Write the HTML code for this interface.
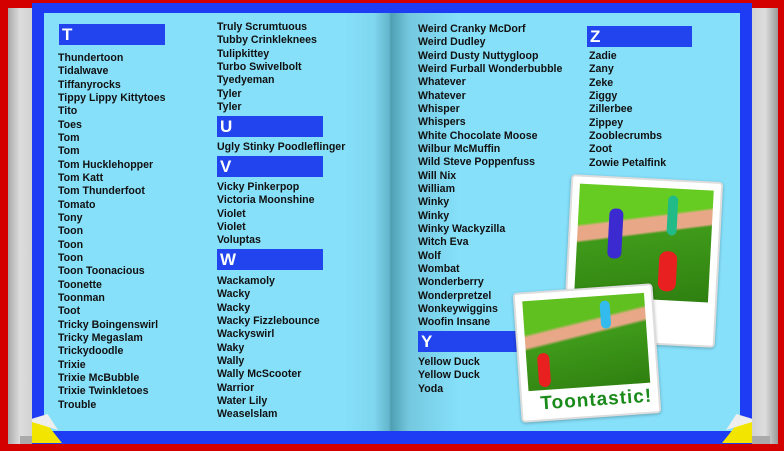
<!DOCTYPE html><html><head><style>
*{margin:0;padding:0;box-sizing:border-box}
body{width:784px;height:451px;overflow:hidden;background:#d40000;position:relative;font-family:"Liberation Sans",sans-serif}
.a{position:absolute}
.col{position:absolute;font-size:10.6px;font-weight:bold;line-height:13.33px;color:#111;white-space:nowrap}
.bar{position:absolute;height:21px;background:#2244ee;color:#fff;font-weight:bold;font-size:17px;line-height:21px;padding-left:3px}
</style></head><body>
<div class="a" style="left:8px;top:8px;width:30px;height:436px;background:linear-gradient(90deg,#aaa,#ddd 40%,#ccc)"></div>
<div class="a" style="left:746px;top:8px;width:32px;height:436px;background:linear-gradient(90deg,#ccc,#ddd 60%,#999)"></div>
<div class="a" style="left:20px;top:436px;width:750px;height:8px;background:#aaa"></div>
<div class="a" style="left:32px;top:3px;width:720px;height:441px;background:#1f3cf5"></div>
<div class="a" style="left:44px;top:13px;width:696px;height:418px;background:linear-gradient(90deg,#86e0fa 0,#86e0fa 300px,#7fd6ee 330px,#63b6cc 345px,#4f9fb3 347px,#74c8de 365px,#7bd2ea 385px,#86e0fa 415px,#86e0fa)"></div>
<div class="a" style="left:32px;top:418px;width:30px;height:25px;background:#f2e600;clip-path:polygon(0 15%,50% 25%,100% 100%,0 100%)"></div>
<div class="a" style="left:32px;top:414px;width:26px;height:16px;background:#eee;clip-path:polygon(0 30%,60% 0,100% 100%,0 50%)"></div>
<div class="a" style="left:722px;top:418px;width:30px;height:25px;background:#f2e600;clip-path:polygon(100% 15%,50% 25%,0 100%,100% 100%)"></div>
<div class="a" style="left:726px;top:414px;width:26px;height:16px;background:#eee;clip-path:polygon(100% 30%,40% 0,0 100%,100% 50%)"></div>

<div class="bar" style="left:59px;top:24px;width:106px">T</div>
<div class="col" style="left:58px;top:52px">Thundertoon<br>Tidalwave<br>Tiffanyrocks<br>Tippy Lippy Kittytoes<br>Tito<br>Toes<br>Tom<br>Tom<br>Tom Hucklehopper<br>Tom Katt<br>Tom Thunderfoot<br>Tomato<br>Tony<br>Toon<br>Toon<br>Toon<br>Toon Toonacious<br>Toonette<br>Toonman<br>Toot<br>Tricky Boingenswirl<br>Tricky Megaslam<br>Trickydoodle<br>Trixie<br>Trixie McBubble<br>Trixie Twinkletoes<br>Trouble</div>

<div class="col" style="left:217px;top:21px">Truly Scrumtuous<br>Tubby Crinkleknees<br>Tulipkittey<br>Turbo Swivelbolt<br>Tyedyeman<br>Tyler<br>Tyler</div>
<div class="bar" style="left:217px;top:116px;width:106px">U</div>
<div class="col" style="left:217px;top:141px">Ugly Stinky Poodleflinger</div>
<div class="bar" style="left:217px;top:156px;width:106px">V</div>
<div class="col" style="left:217px;top:181px">Vicky Pinkerpop<br>Victoria Moonshine<br>Violet<br>Violet<br>Voluptas</div>
<div class="bar" style="left:217px;top:249px;width:106px">W</div>
<div class="col" style="left:217px;top:275px">Wackamoly<br>Wacky<br>Wacky<br>Wacky Fizzlebounce<br>Wackyswirl<br>Waky<br>Wally<br>Wally McScooter<br>Warrior<br>Water Lily<br>Weaselslam</div>

<div class="col" style="left:418px;top:23px">Weird Cranky McDorf<br>Weird Dudley<br>Weird Dusty Nuttygloop<br>Weird Furball Wonderbubble<br>Whatever<br>Whatever<br>Whisper<br>Whispers<br>White Chocolate Moose<br>Wilbur McMuffin<br>Wild Steve Poppenfuss<br>Will Nix<br>William<br>Winky<br>Winky<br>Winky Wackyzilla<br>Witch Eva<br>Wolf<br>Wombat<br>Wonderberry<br>Wonderpretzel<br>Wonkeywiggins<br>Woofin Insane</div>
<div class="bar" style="left:418px;top:331px;width:106px">Y</div>
<div class="col" style="left:418px;top:356px">Yellow Duck<br>Yellow Duck<br>Yoda</div>

<div class="bar" style="left:587px;top:26px;width:105px">Z</div>
<div class="col" style="left:589px;top:50px">Zadie<br>Zany<br>Zeke<br>Ziggy<br>Zillerbee<br>Zippey<br>Zooblecrumbs<br>Zoot<br>Zowie Petalfink</div>

<div class="a" style="left:567px;top:178px;width:152px;height:166px;background:#fff;border:2px solid #ddd;border-radius:4px;transform:rotate(3deg);box-shadow:0 1px 3px #0004">
 <div class="a" style="left:7px;top:7px;width:134px;height:112px;background:linear-gradient(170deg,#66cc22 0,#66cc22 30%,#e8a888 32%,#e8a888 42%,#3f9a1a 44%,#2f8010)"></div>
 <div class="a" style="left:38px;top:30px;width:14px;height:50px;background:#3a2ad0;border-radius:6px"></div>
 <div class="a" style="left:96px;top:14px;width:10px;height:40px;background:#22bb88;border-radius:5px"></div>
 <div class="a" style="left:90px;top:70px;width:18px;height:40px;background:#e82020;border-radius:8px"></div>
</div>
<div class="a" style="left:517px;top:288px;width:140px;height:130px;background:#fff;border:2px solid #ddd;border-radius:4px;transform:rotate(-4deg);box-shadow:0 1px 3px #0004">
 <div class="a" style="left:7px;top:7px;width:122px;height:90px;background:linear-gradient(170deg,#5fc020 0,#5fc020 30%,#e8a888 33%,#e8a888 42%,#3f9a1a 45%,#2f8010)"></div>
 <div class="a" style="left:84px;top:12px;width:10px;height:28px;background:#33bbee;border-radius:5px"></div>
 <div class="a" style="left:18px;top:60px;width:12px;height:34px;background:#e82020;border-radius:6px"></div>
 <div class="a" style="left:18px;top:100px;font-size:19px;font-weight:bold;color:#1a8a1a;letter-spacing:1px">Toontastic!</div>
</div>
</body></html>
